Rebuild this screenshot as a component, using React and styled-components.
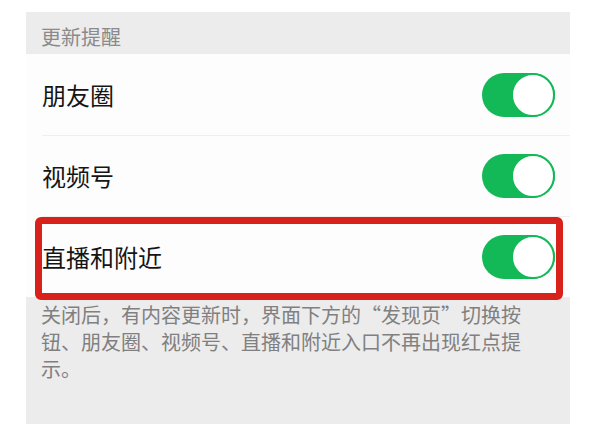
import React from 'react'
import styled, { createGlobalStyle } from 'styled-components'

const GlobalStyle = createGlobalStyle`
  body {
    margin: 0;
    background: #ffffff;
    font-family: "Noto Sans CJK SC", "Noto Sans", sans-serif;
  }
`;

const Page = styled.div`
  width: 611px;
  height: 444px;
  padding: 12px 41px 20px 26px;
  box-sizing: border-box;
`;

const Panel = styled.div`
  width: 544px;
  height: 412px;
  display: flex;
  flex-direction: column;
  background: #ececec;
`;

const SectionTitle = styled.div`
  height: 42px;
  box-sizing: border-box;
  padding: 13px 0 0 15px;
  font-size: 20px;
  line-height: 24px;
  color: #8a8a8a;
`;

const List = styled.div`
  display: flex;
  flex-direction: column;
  background: #fdfdfd;
`;

const Row = styled.div`
  position: relative;
  height: 81px;
  display: flex;
  align-items: center;
  justify-content: space-between;
  padding: 0 15px 0 16px;
  box-sizing: border-box;

  & + &::before {
    content: '';
    position: absolute;
    top: 0;
    left: 16px;
    right: 0;
    height: 1px;
    background: #efefef;
  }
`;

const Label = styled.span`
  font-size: 24px;
  line-height: 30px;
  color: #151515;
`;

const Toggle = styled.div`
  width: 73px;
  height: 44px;
  border-radius: 22px;
  background: ${({ on }) => (on ? '#13b957' : '#e5e5e5')};
  display: flex;
  justify-content: ${({ on }) => (on ? 'flex-end' : 'flex-start')};
  flex-shrink: 0;
`;

const Knob = styled.div`
  width: 44px;
  height: 44px;
  box-sizing: border-box;
  border-radius: 50%;
  background: #ffffff;
  border: 2px solid #13b957;
`;

const Highlight = styled.div`
  position: absolute;
  left: 9px;
  right: 7px;
  top: 1px;
  bottom: -3px;
  border: 7px solid #d8211b;
  border-radius: 6px;
  pointer-events: none;
`;

const Note = styled.div`
  width: 495px;
  padding: 4px 0 0 15px;
  font-size: 20px;
  line-height: 27px;
  color: #808080;
`;

const items = [
  { label: '朋友圈', on: true },
  { label: '视频号', on: true },
  { label: '直播和附近', on: true, marked: true },
];

export default function App() {
  return (
    <>
      <GlobalStyle />
      <Page>
        <Panel>
          <SectionTitle>更新提醒</SectionTitle>
          <List>
            {items.map((item) => (
              <Row key={item.label}>
                <Label>{item.label}</Label>
                <Toggle on={item.on}>
                  <Knob />
                </Toggle>
                {item.marked && <Highlight />}
              </Row>
            ))}
          </List>
          <Note>
            关闭后，有内容更新时，界面下方的“发现页”切换按钮、朋友圈、视频号、直播和附近入口不再出现红点提示。
          </Note>
        </Panel>
      </Page>
    </>
  )
}
